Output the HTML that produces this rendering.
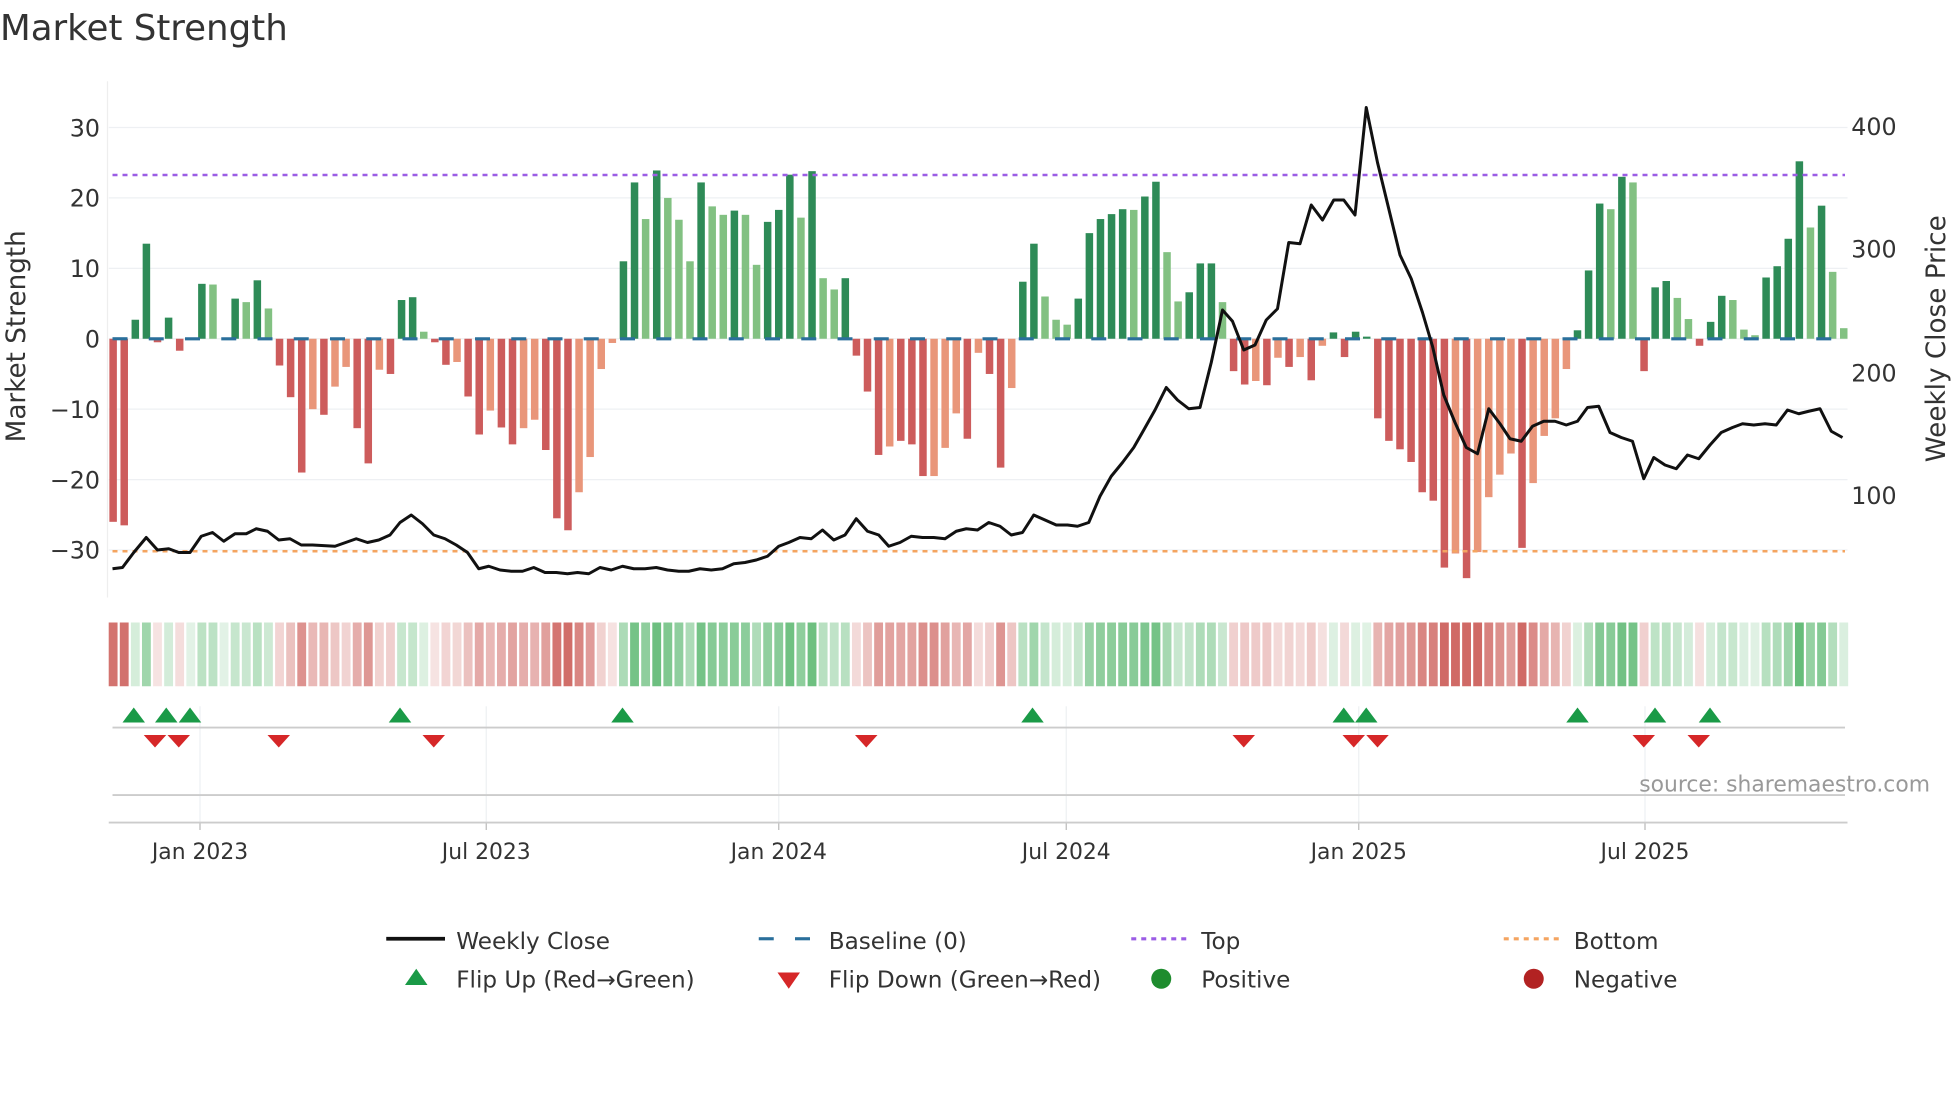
<!DOCTYPE html>
<html><head><meta charset="utf-8"><style>
html,body{margin:0;padding:0;background:#fff;width:1960px;height:1102px;overflow:hidden}
svg text{font-family:"DejaVu Sans","Liberation Sans",sans-serif}
</style></head><body>
<svg id="s" width="1960" height="1102" viewBox="0 0 1568 881.6" xmlns="http://www.w3.org/2000/svg">
<text x="0" y="32" font-size="28.5" fill="#333">Market Strength</text>
<g id="grid"></g>
<g id="bars"></g>
<g id="heat"></g>
<g id="mk"></g>
<text x="22" y="271" font-size="21" fill="#333" text-anchor="middle" transform="rotate(-90 20 271)">Market Strength</text>
<text x="1556" y="271" font-size="21" fill="#333" text-anchor="middle" transform="rotate(-90 1556 271)">Weekly Close Price</text>
<text x="1544" y="633" font-size="17.5" fill="#999" text-anchor="end">source: sharemaestro.com</text>
<g font-size="18.5" fill="#333">
<line x1="309" y1="751" x2="356" y2="751" stroke="#111" stroke-width="3"/>
<text x="365" y="759">Weekly Close</text>
<line x1="607" y1="751" x2="619" y2="751" stroke="#2a6f9b" stroke-width="2.5"/>
<line x1="636" y1="751" x2="648" y2="751" stroke="#2a6f9b" stroke-width="2.5"/>
<text x="663" y="759">Baseline (0)</text>
<line x1="905" y1="751" x2="950" y2="751" stroke="#9b5de5" stroke-width="2.5" stroke-dasharray="4,4"/>
<text x="961" y="759">Top</text>
<line x1="1203" y1="751" x2="1248" y2="751" stroke="#f4a460" stroke-width="2.5" stroke-dasharray="4,4"/>
<text x="1259" y="759">Bottom</text>
<polygon points="333,775 324,788 342,788" fill="#1a9a47"/>
<text x="365" y="790">Flip Up (Red→Green)</text>
<polygon points="622,778 640,778 631,791" fill="#d62728"/>
<text x="663" y="790">Flip Down (Green→Red)</text>
<circle cx="929" cy="783" r="8" fill="#1e8c2e"/>
<text x="961" y="790">Positive</text>
<circle cx="1227" cy="783" r="8" fill="#b22222"/>
<text x="1259" y="790">Negative</text>
</g>
</svg>
<script>
const NS="http://www.w3.org/2000/svg";
function el(p,t,a,txt){const e=document.createElementNS(NS,t);for(const k in a)e.setAttribute(k,a[k]);if(txt!==undefined)e.textContent=txt;document.getElementById(p).appendChild(e);return e;}
const Y=v=>271-v*5.633;
el("grid","line",{x1:86,y1:65,x2:86,y2:478,stroke:"#eee","stroke-width":1});
[30,20,10,0,-10,-20,-30].forEach(v=>{el("grid","line",{x1:87,y1:Y(v),x2:1478,y2:Y(v),stroke:"#eef0f3","stroke-width":1});
 el("grid","text",{x:80,y:Y(v)+7,"font-size":19,fill:"#333","text-anchor":"end"},(v<0?"−":"")+Math.abs(v));});
[[400,101],[300,199],[200,298],[100,396]].forEach(([p,y])=>el("grid","text",{x:1481,y:y+7,"font-size":19,fill:"#333"},p));
const ticks=[[160,"Jan 2023"],[389,"Jul 2023"],[623,"Jan 2024"],[853,"Jul 2024"],[1087,"Jan 2025"],[1316,"Jul 2025"]];
ticks.forEach(([x,t])=>{el("grid","line",{x1:x,y1:565,x2:x,y2:658,stroke:"#eef0f3","stroke-width":1});
 el("grid","line",{x1:x,y1:658,x2:x,y2:664,stroke:"#bbb","stroke-width":1});
 el("grid","text",{x:x,y:687,"font-size":17.5,fill:"#333","text-anchor":"middle"},t);});
el("grid","line",{x1:90,y1:582,x2:1476,y2:582,stroke:"#ccc","stroke-width":1.5});
el("grid","line",{x1:90,y1:636,x2:1476,y2:636,stroke:"#ccc","stroke-width":1.5});
el("grid","line",{x1:87,y1:658,x2:1478,y2:658,stroke:"#ccc","stroke-width":1.5});
const B=[[-26,0],[-26.5,0],[2.7,0],[13.5,0],[-0.5,0],[3,0],[-1.7,0],[0,0],[7.8,0],[7.7,1],[0,0],[5.7,0],[5.2,1],[8.3,0],[4.3,1],[-3.8,0],[-8.3,0],[-19,0],[-10,1],[-10.8,0],[-6.8,1],[-4,1],[-12.7,0],[-17.7,0],[-4.4,1],[-5,0],[5.5,0],[5.9,0],[1,1],[-0.5,0],[-3.7,0],[-3.3,1],[-8.2,0],[-13.6,0],[-10.2,1],[-12.6,0],[-15,0],[-12.7,1],[-11.5,1],[-15.8,0],[-25.5,0],[-27.2,0],[-21.8,1],[-16.8,1],[-4.3,1],[-0.6,1],[11,0],[22.2,0],[17,1],[23.9,0],[20,1],[16.9,1],[11,1],[22.2,0],[18.8,1],[17.6,1],[18.2,0],[17.6,1],[10.5,1],[16.6,0],[18.3,0],[23.3,0],[17.2,1],[23.8,0],[8.6,1],[7,1],[8.6,0],[-2.4,0],[-7.5,0],[-16.5,0],[-15.3,1],[-14.5,0],[-15,0],[-19.5,0],[-19.5,1],[-15.5,1],[-10.6,1],[-14.2,0],[-2,1],[-5,0],[-18.3,0],[-7,1],[8.1,0],[13.5,0],[6,1],[2.7,1],[2,1],[5.7,0],[15,0],[17,0],[17.7,0],[18.4,0],[18.3,1],[20.2,0],[22.3,0],[12.3,1],[5.3,1],[6.6,0],[10.7,0],[10.7,0],[5.2,1],[-4.6,0],[-6.5,0],[-6,1],[-6.6,0],[-2.7,1],[-4,0],[-2.6,1],[-5.9,0],[-1,1],[0.9,0],[-2.6,0],[1,0],[0.3,0],[-11.3,0],[-14.5,0],[-15.7,0],[-17.5,0],[-21.8,0],[-23,0],[-32.5,0],[-30.5,1],[-34,0],[-30.3,1],[-22.5,1],[-19.3,1],[-16.3,1],[-29.7,0],[-20.5,1],[-13.8,1],[-11.3,1],[-4.3,1],[1.2,0],[9.7,0],[19.2,0],[18.4,1],[23,0],[22.2,1],[-4.6,0],[7.3,0],[8.2,0],[5.8,1],[2.8,1],[-1,0],[2.4,0],[6.1,0],[5.5,1],[1.3,1],[0.5,1],[8.7,0],[10.3,0],[14.2,0],[25.2,0],[15.8,1],[18.9,0],[9.5,1],[1.5,1]];
const n=B.length, x0=90.5, st=(1475-x0)/(n-1);
const col=(v,l)=>v>=0?(l?"#82c182":"#2e8b57"):(l?"#e9967a":"#cd5c5c");
B.forEach(([v,l],i)=>{const x=x0+i*st;if(Math.abs(v)>0.05){const y=Y(v);el("bars","rect",{x:x-3,y:Math.min(y,271),width:6,height:Math.abs(271-y),fill:col(v,l)});}
 const a=Math.min(0.85,0.15+Math.abs(v)/40);
 const c=v>=0?`rgba(60,170,85,${a})`:`rgba(200,80,75,${a})`;
 el("heat","rect",{x:x-st/2+0.9,y:498,width:st-1.8,height:51,fill:c});});
el("bars","line",{x1:90,y1:271,x2:1478,y2:271,stroke:"#2a6f9b","stroke-width":2.5,"stroke-dasharray":"12,17"});
el("bars","line",{x1:90,y1:140,x2:1476,y2:140,stroke:"#9b5de5","stroke-width":2,"stroke-dasharray":"4,4"});
el("bars","line",{x1:90,y1:441,x2:1476,y2:441,stroke:"#f4a460","stroke-width":2,"stroke-dasharray":"4,4"});
const P="90,455 98,454 107,442 117,430 126,440 135,439 143,442 152,442 161,429 170,426 179,433 188,427 197,427 205,423 214,425 223,432 232,431 241,436 250,436 268,437 285,431 294,434 303,432 312,428 320,418 329,412 338,419 347,428 356,431 365,436 374,442 383,455 391,453 400,456 409,457 418,457 427,454 436,458 445,458 454,459 462,458 471,459 480,454 489,456 498,453 507,455 516,455 525,454 534,456 543,457 551,457 560,455 569,456 578,455 587,451 596,450 605,448 614,445 623,437 631,434 640,430 649,431 658,424 667,432 676,428 685,415 694,425 703,428 711,437 720,434 729,429 738,430 747,430 756,431 765,425 773,423 782,424 791,418 800,421 809,428 818,426 827,412 836,416 845,420 854,420 862,421 871,418 880,397 889,381 898,370 907,358 915,344 924,328 933,310 942,320 951,327 960,326 969,290 978,248 986,257 995,280 1004,276 1013,256 1022,247 1031,194 1040,195 1049,164 1058,176 1067,160 1075,160 1084,172 1093,86 1102,130 1111,167 1120,204 1129,223 1138,250 1146,277 1155,316 1164,338 1173,358 1182,363 1191,327 1200,339 1208,351 1217,353 1226,341 1235,337 1244,337 1253,340 1262,337 1270,326 1279,325 1288,346 1297,350 1306,353 1315,383 1323,366 1332,372 1341,375 1350,364 1359,367 1368,356 1377,346 1386,342 1394,339 1403,340 1412,339 1421,340 1430,328 1439,331 1447,329 1456,327 1465,345 1474,350";
el("bars","polyline",{points:P,fill:"none",stroke:"#111","stroke-width":2.4,"stroke-linejoin":"round"});
[107,133,152,320,498,826,1075,1093,1262,1324,1368].forEach(x=>el("mk","polygon",{points:`${x},566 ${x-9},578 ${x+9},578`,fill:"#1a9a47"}));
[124,143,223,347,693,995,1083,1102,1315,1359].forEach(x=>el("mk","polygon",{points:`${x-9},588 ${x+9},588 ${x},598`,fill:"#d62728"}));
</script>
</body></html>
